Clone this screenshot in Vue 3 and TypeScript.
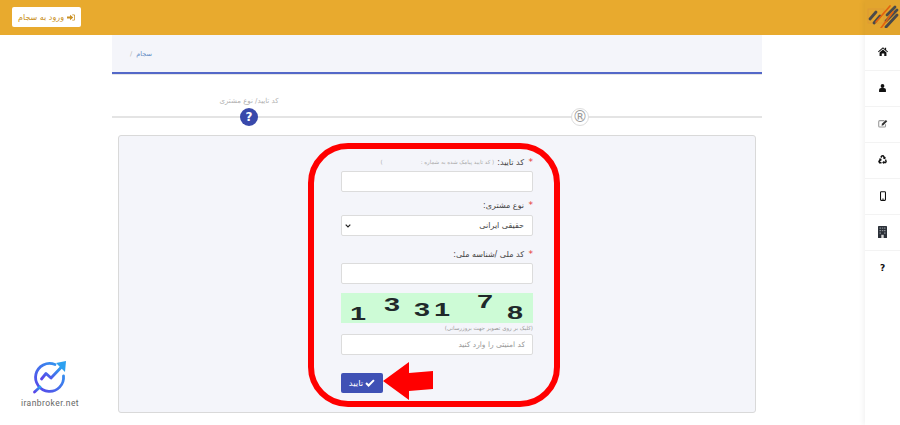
<script setup lang="ts">
const digits = [
  { c: '1', x: 9, y: 12 },
  { c: '3', x: 43, y: 3 },
  { c: '3', x: 73, y: 8 },
  { c: '1', x: 93, y: 8 },
  { c: '7', x: 136, y: 0 },
  { c: '8', x: 166, y: 11 },
]
</script>

<template>
  <div class="app">
    <div class="main">
      <header class="topbar">
        <button class="login">
          <span>ورود به سجام</span>
          <svg class="login-ic" viewBox="0 0 16 14"><path d="M0 5h6V1.500L12.500 7 6 12.500V9H0z" /><path d="M10.500 1H14a2 2 0 0 1 2 2v8a2 2 0 0 1-2 2h-3.500v-1.500H13.500a1 1 0 0 0 1-1V3.500a1 1 0 0 0-1-1h-3z" /></svg>
        </button>
      </header>

      <div class="page">
        <nav class="crumb"><span class="sep">/</span><span class="crumb-link">سجام</span></nav>

        <div class="stepper">
          <div class="step first">
            <span class="step-label">کد تایید/ نوع مشتری</span>
            <span class="dot active">?</span>
          </div>
          <div class="step second">
            <span class="dot idle">®</span>
          </div>
        </div>

        <section class="card">
          <form class="form" dir="rtl" @submit.prevent>
            <div class="label l1"><i>*</i><b>کد تایید:</b><small>( کد تایید پیامک شده به شماره :</small><small class="close">)</small></div>
            <input class="field" type="text" />
            <div class="label l2"><i>*</i><b>نوع مشتری:</b></div>
            <select class="field sel"><option>حقیقی ایرانی</option></select>
            <div class="label l3"><i>*</i><b>کد ملی /شناسه ملی:</b></div>
            <input class="field" type="text" />
            <div class="captcha" dir="ltr">
              <span v-for="(d, i) in digits" :key="i" class="digit" :style="{ left: d.x + 'px', top: d.y + 'px' }">{{ d.c }}</span>
            </div>
            <div class="hint">(کلیک بر روی تصویر جهت بروزرسانی)</div>
            <input class="field ph" type="text" placeholder="کد امنیتی را وارد کنید" />
            <div class="actions">
              <button class="submit">
                <svg class="check" viewBox="0 0 14 11"><path d="M1.500 5.500 5 9l7.500-7.500" /></svg>
                <span>تایید</span>
              </button>
            </div>
          </form>
        </section>
      </div>
    </div>

    <aside class="side">
      <div class="brand">
        <svg viewBox="0 0 32 24" width="32" height="24">
          <rect x="1" y="5" width="16" height="14" fill="none" stroke="#d9923a" stroke-width=".6" />
          <g stroke="#4a4a4a" stroke-width="2.800" stroke-linecap="round">
            <path d="M3 15 9 8" /><path d="M7 19 13 12" />
            <path d="M19 23 30 11" /><path d="M19 17 30 6" /><path d="M20 11 28 3" />
          </g>
          <g stroke="#e2620e" stroke-width="1.700" stroke-linecap="round">
            <path d="M9 18 23 2" /><path d="M14 24 26 8" />
          </g>
        </svg>
      </div>
      <a class="item"><svg viewBox="0 0 16 14" width="10" height="9"><path fill="#111" d="M8 0 0 7l1 1.200L8 2.300l7 5.900L16 7l-3-2.500V1h-2v1.800zM2.500 8.500V14H6v-4h4v4h3.500V8.500L8 3.800z" /></svg></a>
      <a class="item"><svg viewBox="0 0 12 14" width="7" height="8"><circle cx="6" cy="3.500" r="3.300" fill="#111" /><path fill="#111" d="M0 14v-3.500C0 8.500 1.500 7 3.500 7h5C10.500 7 12 8.500 12 10.500V14z" /></svg></a>
      <a class="item"><svg viewBox="0 0 14 12" width="10" height="9"><path fill="none" stroke="#999" stroke-width="1.500" d="M9 2H2.500A1.500 1.500 0 0 0 1 3.500v6A1.500 1.500 0 0 0 2.500 11h6.500A1.500 1.500 0 0 0 10.500 9.500V7" /><path fill="#333" d="M5.500 6.500 11 1l2 2-5.500 5.500-2.500.5z" /></svg></a>
      <a class="item"><svg viewBox="0 0 14 14" width="9" height="9"><g fill="#111"><path d="M7 0 9 .3l2 3.200 1.200-.7-1 3.700L7.500 5.500l1.200-.7L7 2 5.500 4.500 3.500 3.300 5 .8z" /><path d="M13.800 10 12.500 13H9v1.300L6.500 11.500 9 8.800V10h2.800l-1.200-2.300 2-1.200z" /><path d="M.2 10 2.400 6.300 1.300 5.600l3.700-.3 1 3.500-1.100-.7L3 11h2.500v2.400H1.800z" /></g></svg></a>
      <a class="item"><svg viewBox="0 0 8 13" width="6" height="10"><rect x=".7" y=".7" width="6.600" height="11.600" rx="1" fill="none" stroke="#111" stroke-width="1.400" /><rect x="3" y="10" width="2" height="1.300" fill="#111" /></svg></a>
      <a class="item"><svg viewBox="0 0 9 12" width="9" height="12"><rect width="9" height="12" rx=".6" fill="#2b3038" /><g fill="#8b9096"><rect x="1.500" y="1.500" width="1.500" height="1.200" /><rect x="3.800" y="1.500" width="1.500" height="1.200" /><rect x="6" y="1.500" width="1.500" height="1.200" /><rect x="1.500" y="4" width="1.500" height="1.200" /><rect x="3.800" y="4" width="1.500" height="1.200" /><rect x="6" y="4" width="1.500" height="1.200" /><rect x="1.500" y="6.500" width="1.500" height="1.200" /><rect x="6" y="6.500" width="1.500" height="1.200" /></g><rect x="3.300" y="8.800" width="2.400" height="3.200" fill="#d6d6d6" /></svg></a>
      <a class="item q">?</a>
    </aside>

    <!-- annotation drawn over the screenshot -->
    <div class="ring"></div>
    <svg class="arrow" viewBox="0 0 52 38" width="52" height="38"><polygon fill="#ff0000" points="0,19 26,0 26,11 50,9 50,27 26,29 26,38" /></svg>

    <!-- watermark -->
    <div class="mark">
      <svg viewBox="0 0 36 36" width="36" height="36">
        <defs>
          <linearGradient id="g" x1="0" y1="1" x2="1" y2="0">
            <stop offset="0" stop-color="#5a42e8" />
            <stop offset="1" stop-color="#2ca0f0" />
          </linearGradient>
        </defs>
        <g fill="none" stroke="url(#g)" stroke-width="2.800" stroke-linecap="round" stroke-linejoin="round">
          <path d="M31.500 17A14 14 0 1 1 23 5.500" />
          <path d="M8 28 2.500 33" />
          <path d="M9.500 20 14 14.500 19 19 29.500 8" />
        </g>
        <polygon fill="#2ca0f0" points="24,4 34,2 33,13" />
      </svg>
      <span class="mark-text">iranbroker.net</span>
    </div>
  </div>
</template>

<style>
html, body { margin: 0; background: #fff; overflow: hidden; }
</style>

<style scoped>
.app {
  position: relative;
  display: flex;
  width: 900px;
  height: 425px;
  overflow: hidden;
  font-family: "DejaVu Sans", sans-serif;
  color: #444;
}
.main { flex: 1; min-width: 0; }
.topbar {
  height: 35px;
  background: #e8aa2e;
  padding: 7px 0 0 12px;
  box-sizing: border-box;
}
.login {
  display: flex;
  align-items: center;
  justify-content: center;
  gap: 3px;
  width: 69px;
  height: 20px;
  padding: 0;
  background: #fff;
  border: 0;
  border-radius: 2px;
  color: #c98f22;
  font: 8px "DejaVu Sans", sans-serif;
}
.login-ic { width: 8px; height: 7px; fill: #c98f22; }
.page { width: 650px; margin-left: 112px; }
.crumb {
  height: 39px;
  box-sizing: border-box;
  display: flex;
  align-items: center;
  gap: 4px;
  padding: 1px 0 0 18px;
  background: #f4f5fa;
  border-bottom: 2px solid #5468c8;
  box-shadow: 0 1px 0 #e6e6e6;
  font-size: 6.500px;
}
.sep { color: #b5b5b5; }
.crumb-link { color: #5f8ac4; }
.stepper {
  position: relative;
  display: flex;
  align-items: flex-end;
  height: 51px;
  margin-top: 4px;
  box-sizing: border-box;
  padding-bottom: 3px;
}
.stepper::before {
  content: "";
  position: absolute;
  left: 0;
  right: 0;
  bottom: 11px;
  height: 2px;
  background: #e4e4e4;
}
.step {
  position: relative;
  display: flex;
  flex-direction: column;
  align-items: center;
  width: 100px;
}
.first { margin-left: 87px; }
.second { margin-left: 231px; }
.step-label {
  font-size: 7px;
  line-height: 12px;
  margin-bottom: 1px;
  color: #b0b0b0;
  white-space: nowrap;
  direction: rtl;
}
.dot {
  display: flex;
  align-items: center;
  justify-content: center;
  width: 18px;
  height: 18px;
  box-sizing: border-box;
  border-radius: 50%;
}
.active {
  background: #3949ab;
  color: #fff;
  font: bold 12px "DejaVu Sans", sans-serif;
}
.idle {
  background: #fff;
  border: 1px solid #ddd;
  color: #999;
  font-size: 15px;
}
.card {
  width: 638px;
  height: 278px;
  margin: 6px 0 0 6px;
  box-sizing: border-box;
  padding: 19px 0 0;
  background: #f4f5fa;
  border: 1px solid #d9d9d9;
  border-radius: 3px;
}
.form {
  width: 192px;
  margin: 0 auto;
  display: flex;
  flex-direction: column;
}
.label {
  display: flex;
  align-items: center;
  height: 14px;
  font-size: 8px;
  color: #444;
  white-space: nowrap;
}
.label i {
  width: 9px;
  font-style: normal;
  color: #e53935;
  font-size: 9px;
  flex: none;
}
.label b { font-weight: 400; margin-left: 3px; }
.label small { font-size: 5.500px; color: #aaa; }
.label .close { margin-right: 38px; }
.l1 { margin-bottom: 2px; }
.l2 { margin-top: 6px; margin-bottom: 3px; }
.l3 { margin-top: 11px; margin-bottom: 2px; }
.field {
  display: block;
  width: 100%;
  height: 21px;
  box-sizing: border-box;
  padding: 0 8px;
  background: #fff;
  border: 1px solid #dcdcdc;
  border-radius: 2px;
  font: 8px "DejaVu Sans", sans-serif;
  color: #444;
  outline: none;
}
.field::placeholder { color: #999; opacity: 1; }
.ph { font-size: 7.500px; padding-right: 7px; }
.sel {
  padding: 0 8px;
  appearance: none;
  background: #fff url("data:image/svg+xml,%3Csvg xmlns='http://www.w3.org/2000/svg' viewBox='0 0 6 4'%3E%3Cpath d='M.7.7 3 3 5.300.7' fill='none' stroke='%23222' stroke-width='1.200'/%3E%3C/svg%3E") no-repeat 3px center / 6px 4px;
}
.captcha {
  position: relative;
  height: 30px;
  margin-top: 9px;
  background: #cdfbd6;
  overflow: hidden;
}
.digit {
  position: absolute;
  font-family: "Liberation Sans", sans-serif;
  font-size: 18px;
  font-weight: 700;
  line-height: 18px;
  color: #20282a;
  transform: scaleX(1.6);
  transform-origin: left top;
}
.hint {
  height: 11px;
  line-height: 11px;
  font-size: 5.500px;
  color: #999;
}
.actions { margin-top: 18px; display: flex; justify-content: flex-end; }
.submit {
  display: flex;
  align-items: center;
  justify-content: center;
  gap: 2px;
  width: 42px;
  height: 20px;
  padding: 0;
  background: #3f51b5;
  border: 0;
  border-radius: 2px;
  color: #fff;
  font: 8.500px "DejaVu Sans", sans-serif;
}
.check { width: 10px; height: 8px; fill: none; stroke: #fff; stroke-width: 2.800; }
.side {
  width: 35px;
  flex: none;
  background: #fff;
  box-shadow: -2px 0 5px rgba(0, 0, 0, .05);
  z-index: 1;
}
.brand {
  height: 35px;
  box-sizing: border-box;
  padding-top: 4px;
  display: flex;
  justify-content: center;
  background: #e2a52d;
}
.item {
  display: flex;
  align-items: center;
  justify-content: center;
  height: 36px;
  padding-bottom: 2px;
  box-sizing: border-box;
  border-bottom: 1px solid #f3f3f3;
}
.q { border-bottom: 0; font: bold 9px "DejaVu Sans", sans-serif; color: #111; }
.ring {
  position: absolute;
  left: 308px;
  top: 143px;
  width: 252px;
  height: 264px;
  box-sizing: border-box;
  border: 6px solid #ff0000;
  border-radius: 40px;
  pointer-events: none;
}
.arrow { position: absolute; left: 383px; top: 362px; }
.mark {
  position: absolute;
  left: 14px;
  top: 359px;
  width: 72px;
  display: flex;
  flex-direction: column;
  align-items: center;
  gap: 3px;
}
.mark-text {
  font: 8.500px "Roboto", sans-serif;
  letter-spacing: .45px;
  color: #666;
}
</style>
